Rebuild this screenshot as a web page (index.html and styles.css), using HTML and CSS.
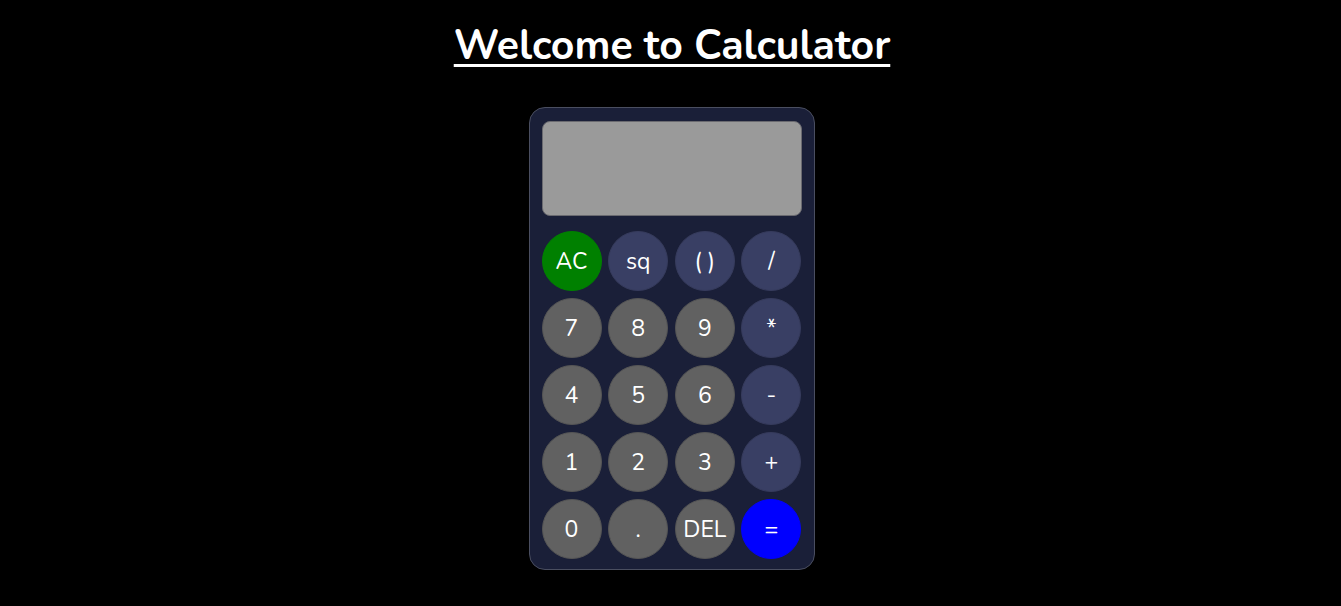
FILE: index.html
```html
<!DOCTYPE html>
<html lang="en">
<head>
<meta charset="utf-8">
<title>Calculator</title>
<link rel="stylesheet" href="styles.css">
</head>
<body>
<h1 class="title">Welcome to Calculator</h1>
<div class="calc">
  <div class="display"></div>
  <div class="keys">
    <button class="key green">AC</button>
    <button class="key op">sq</button>
    <button class="key op">( )</button>
    <button class="key op">/</button>
    <button class="key">7</button>
    <button class="key">8</button>
    <button class="key">9</button>
    <button class="key op">*</button>
    <button class="key">4</button>
    <button class="key">5</button>
    <button class="key">6</button>
    <button class="key op">-</button>
    <button class="key">1</button>
    <button class="key">2</button>
    <button class="key">3</button>
    <button class="key op">+</button>
    <button class="key">0</button>
    <button class="key">.</button>
    <button class="key">DEL</button>
    <button class="key blue">=</button>
  </div>
</div>
</body>
</html>
```
FILE: styles.css
```css
html, body {
  margin: 0;
  padding: 0;
  background: #000;
}
body {
  font-family: "Nunito", "Open Sans", "DejaVu Sans", sans-serif;
  color: #fff;
  display: flex;
  flex-direction: column;
  align-items: center;
}
.title {
  margin: 18px 0 0 3px;
  font-size: 41px;
  font-weight: 700;
  line-height: 56px;
  text-decoration: underline;
  text-decoration-thickness: 3px;
  text-underline-offset: 5px;
}
.calc {
  margin-top: 33px;
  margin-left: 2px;
  width: 260px;
  padding: 13px 12px 10px;
  background: #1a1f38;
  border: 1px solid #4a4e60;
  border-radius: 16px;
}
.display {
  height: 93px;
  background: #9a9a9a;
  border: 1px solid #6a6a70;
  border-radius: 8px;
}
.keys {
  margin-top: 15px;
  display: grid;
  grid-template-columns: repeat(4, 60px);
  justify-content: space-between;
  row-gap: 7px;
}
.key {
  width: 60px;
  height: 60px;
  border-radius: 50%;
  border: 1px solid #555;
  background: #616161;
  color: #fff;
  font-family: inherit;
  font-size: 23px;
  padding: 0;
  display: flex;
  align-items: center;
  justify-content: center;
}
.key.op {
  background: #393f64;
  border-color: #363b5c;
}
.key.green {
  background: #008000;
  border-color: #008000;
}
.key.blue {
  background: #0000ff;
  border-color: #0000ff;
}
```
